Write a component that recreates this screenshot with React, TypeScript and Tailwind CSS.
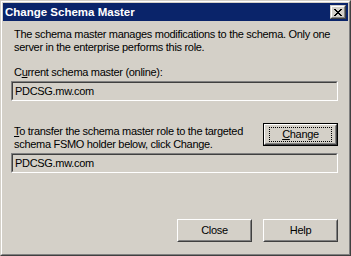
import React from "react";

const font = { fontFamily: '"Liberation Sans", Arial, sans-serif' };

function Btn({ children, def }: { children: React.ReactNode; def?: boolean }) {
  const inner = (
    <div className="h-full w-full border border-t-white border-l-white border-b-[#404040] border-r-[#404040]">
      <div className="h-full w-full border border-t-[#d4d0c8] border-l-[#d4d0c8] border-b-[#808080] border-r-[#808080] flex items-center justify-center">
        {def ? (
          <div className="border border-dotted border-black h-[15px] w-[63px] flex items-center justify-center leading-[13px]">
            {children}
          </div>
        ) : (
          <span className="leading-[13px]">{children}</span>
        )}
      </div>
    </div>
  );
  return (
    <div className={"shrink-0 w-[75px] h-[23px] bg-[#d4d0c8] " + (def ? "border border-black" : "")}>
      {inner}
    </div>
  );
}

function Box({ text }: { text: string }) {
  return (
    <div className="h-[20px] border border-t-[#808080] border-l-[#808080] border-b-white border-r-white">
      <div className="h-full border border-t-[#404040] border-l-[#404040] border-b-[#d4d0c8] border-r-[#d4d0c8] bg-[#d4d0c8] flex items-center pl-[2px] leading-[13px]">
        {text}
      </div>
    </div>
  );
}

export default function App() {
  return (
    <div style={font} className="w-[351px] h-[256px] text-[11px] tracking-[-0.3px] text-black select-none">
      <div className="w-full h-full border border-t-[#d4d0c8] border-l-[#d4d0c8] border-b-[#404040] border-r-[#404040]">
        <div className="w-full h-full border border-t-white border-l-white border-b-[#808080] border-r-[#808080] bg-[#d4d0c8] p-px flex flex-col">
          {/* Title bar */}
          <div className="h-[18px] bg-[#0a246a] flex items-center pl-[2px] pr-[2px]">
            <span className="text-white font-bold text-[11.5px] tracking-normal leading-[13px] flex-1">Change Schema Master</span>
            <div className="w-[16px] h-[14px] border border-t-[#d4d0c8] border-l-[#d4d0c8] border-b-[#404040] border-r-[#404040] bg-[#d4d0c8]">
              <div className="w-full h-full border border-t-white border-l-white border-b-[#808080] border-r-[#808080] flex items-center justify-center">
                <svg width="8" height="7" viewBox="0 0 8 7" shapeRendering="crispEdges">
                  <path d="M0 0h2v1h-2zM6 0h2v1h-2zM1 1h2v1h-2zM5 1h2v1h-2zM2 2h4v1h-4zM3 3h2v1h-2zM2 4h4v1h-4zM1 5h2v1h-2zM5 5h2v1h-2zM0 6h2v1h-2zM6 6h2v1h-2z" fill="#000" />
                </svg>
              </div>
            </div>
          </div>
          {/* Content */}
          <div className="flex-1 flex flex-col pl-[8px] pr-[10px] pt-[7px] leading-[13px]">
            <p className="ml-[3px]">
              The schema master manages modifications to the schema. Only one server in the enterprise performs this role.
            </p>
            <p className="ml-[3px] mt-[12px]">
              C<span className="underline">u</span>rrent schema master (online):
            </p>
            <div className="mt-[2px]">
              <Box text="PDCSG.mw.com" />
            </div>
            <div className="mt-[22px] flex items-start justify-between">
              <p className="ml-[3px] pt-[2px] w-[246px]">
                <span className="underline">T</span>o transfer the schema master role to the targeted schema FSMO holder below, click Change.
              </p>
              <Btn def>
                <span><span className="underline">C</span>hange</span>
              </Btn>
            </div>
            <div className="mt-[2px]">
              <Box text="PDCSG.mw.com" />
            </div>
            <div className="mt-[46px] flex justify-end gap-[11px]">
              <Btn>Close</Btn>
              <Btn>Help</Btn>
            </div>
          </div>
        </div>
      </div>
    </div>
  );
}
